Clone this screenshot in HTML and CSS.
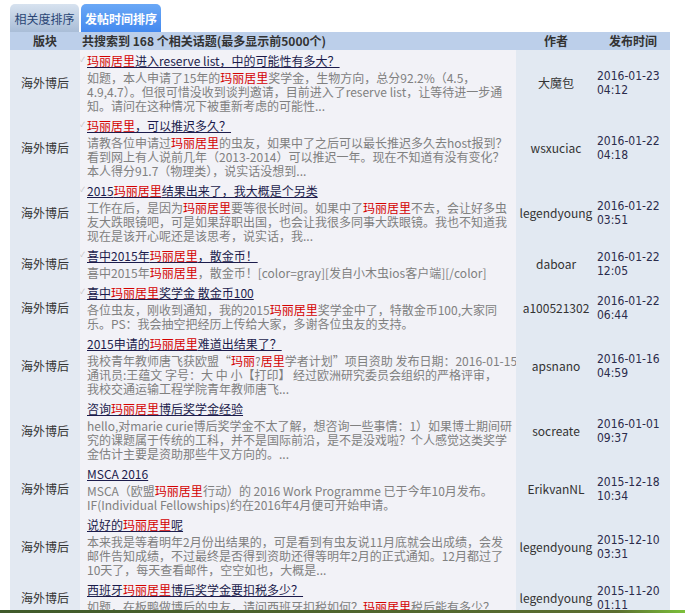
FILE: index.html
```html
<!DOCTYPE html>
<html lang="zh-CN">
<head>
<meta charset="utf-8">
<title>搜索结果</title>
<link rel="stylesheet" href="styles.css">
</head>
<body>
<div class="wrap">
  <div class="tabs">
    <a class="tab">相关度排序</a>
    <a class="tab active">发帖时间排序</a>
  </div>
  <table class="list">
    <colgroup><col class="c-forum"><col class="c-topic"><col class="c-author"><col class="c-time"></colgroup>
    <thead>
      <tr><th class="forum">版块</th><th class="topic">共搜索到 168 个相关话题(最多显示前5000个)</th><th class="author">作者</th><th class="time">发布时间</th></tr>
    </thead>
    <tbody>
      <tr>
        <td class="forum">海外博后</td>
        <td class="topic"><div class="title"><span class="chk">✓</span><a><em>玛丽居里</em>进入reserve list，中的可能性有多大？</a></div>
          <div class="desc">如题，本人申请了15年的<em>玛丽居里</em>奖学金，生物方向，总分92.2%（4.5，<br>4.9,4.7）。但很可惜没收到谈判邀请，目前进入了reserve list，让等待进一步通<br>知。请问在这种情况下被重新考虑的可能性...</div></td>
        <td class="author">大魔包</td>
        <td class="time">2016-01-23<br>04:12</td>
      </tr>
      <tr>
        <td class="forum">海外博后</td>
        <td class="topic"><div class="title"><span class="chk">✓</span><a><em>玛丽居里</em>，可以推迟多久？</a></div>
          <div class="desc">请教各位申请过<em>玛丽居里</em>的虫友，如果中了之后可以最长推迟多久去host报到？<br>看到网上有人说前几年（2013-2014）可以推迟一年。现在不知道有没有变化？<br>本人得分91.7（物理类），说实话没想到...</div></td>
        <td class="author">wsxuciac</td>
        <td class="time">2016-01-22<br>04:18</td>
      </tr>
      <tr>
        <td class="forum">海外博后</td>
        <td class="topic"><div class="title"><span class="chk">✓</span><a>2015<em>玛丽居里</em>结果出来了，我大概是个另类</a></div>
          <div class="desc">工作在后，是因为<em>玛丽居里</em>要等很长时间。如果中了<em>玛丽居里</em>不去，会让好多虫<br>友大跌眼镜吧，可是如果辞职出国，也会让我很多同事大跌眼镜。我也不知道我<br>现在是该开心呢还是该思考，说实话，我...</div></td>
        <td class="author">legendyoung</td>
        <td class="time">2016-01-22<br>03:51</td>
      </tr>
      <tr>
        <td class="forum">海外博后</td>
        <td class="topic"><div class="title"><span class="chk">✓</span><a>喜中2015年<em>玛丽居里</em>，散金币！</a></div>
          <div class="desc">喜中2015年<em>玛丽居里</em>，散金币！[color=gray][发自小木虫ios客户端][/color]</div></td>
        <td class="author">daboar</td>
        <td class="time">2016-01-22<br>12:05</td>
      </tr>
      <tr>
        <td class="forum">海外博后</td>
        <td class="topic"><div class="title"><span class="chk">✓</span><a>喜中<em>玛丽居里</em>奖学金 散金币100</a></div>
          <div class="desc">各位虫友，刚收到通知，我的2015<em>玛丽居里</em>奖学金中了，特散金币100,大家同<br>乐。PS：我会抽空把经历上传给大家，多谢各位虫友的支持。</div></td>
        <td class="author">a100521302</td>
        <td class="time">2016-01-22<br>06:44</td>
      </tr>
      <tr>
        <td class="forum">海外博后</td>
        <td class="topic"><div class="title"><a>2015申请的<em>玛丽居里</em>难道出结果了？</a></div>
          <div class="desc">我校青年教师唐飞获欧盟“<em>玛丽</em>?<em>居里</em>学者计划”项目资助 发布日期：2016-01-15<br>通讯员:王蕴文 字号：大 中 小【打印】 经过欧洲研究委员会组织的严格评审，<br>我校交通运输工程学院青年教师唐飞...</div></td>
        <td class="author">apsnano</td>
        <td class="time">2016-01-16<br>04:59</td>
      </tr>
      <tr>
        <td class="forum">海外博后</td>
        <td class="topic"><div class="title"><a>咨询<em>玛丽居里</em>博后奖学金经验</a></div>
          <div class="desc">hello,对marie curie博后奖学金不太了解，想咨询一些事情：1）如果博士期间研<br>究的课题属于传统的工科，并不是国际前沿，是不是没戏啦？个人感觉这类奖学<br>金估计主要是资助那些牛叉方向的。...</div></td>
        <td class="author">socreate</td>
        <td class="time">2016-01-01<br>09:37</td>
      </tr>
      <tr>
        <td class="forum">海外博后</td>
        <td class="topic"><div class="title"><a>MSCA 2016</a></div>
          <div class="desc">MSCA（欧盟<em>玛丽居里</em>行动）的 2016 Work Programme 已于今年10月发布。<br>IF(Individual Fellowships)约在2016年4月便可开始申请。</div></td>
        <td class="author">ErikvanNL</td>
        <td class="time">2015-12-18<br>10:34</td>
      </tr>
      <tr>
        <td class="forum">海外博后</td>
        <td class="topic"><div class="title"><a>说好的<em>玛丽居里</em>呢</a></div>
          <div class="desc">本来我是等着明年2月份出结果的，可是看到有虫友说11月底就会出成绩，会发<br>邮件告知成绩，不过最终是否得到资助还得等明年2月的正式通知。12月都过了<br>10天了，每天查看邮件，空空如也，大概是...</div></td>
        <td class="author">legendyoung</td>
        <td class="time">2015-12-10<br>03:31</td>
      </tr>
      <tr>
        <td class="forum">海外博后</td>
        <td class="topic"><div class="title"><a>西班牙<em>玛丽居里</em>博后奖学金要扣税多少？</a></div>
          <div class="desc">如题，在板鸭做博后的虫友，请问西班牙扣税如何？<em>玛丽居里</em>税后能有多少？</div></td>
        <td class="author">legendyoung</td>
        <td class="time">2015-11-20<br>01:11</td>
      </tr>
    </tbody>
  </table>
</div>
<div class="taskbar"></div>
</body>
</html>
```

FILE: styles.css
```css
html, body {
  margin: 0;
  padding: 0;
  overflow: hidden;
  background: #ffffff;
}
body {
  font-family: "Noto Sans CJK SC", sans-serif;
  font-size: 12px;
  color: #333;
}
.wrap {
  padding: 4px 0 0 10px;
  width: 660px;
}
.tabs {
  display: flex;
  gap: 2px;
  height: 28px;
}
.tab {
  display: flex;
  align-items: center;
  justify-content: center;
  height: 28px;
  border-radius: 5px 5px 0 0;
  font-size: 12px;
  color: #2a4675;
  background: linear-gradient(#d7e2ef, #a9bdd7);
  width: 69px;
}
.tab.active {
  width: 80px;
  color: #fff;
  font-weight: bold;
  background: linear-gradient(#6aa8f6, #4389ef);
}
.list {
  border-collapse: collapse;
  table-layout: fixed;
  width: 660px;
}
.c-forum { width: 70px; }
.c-topic { width: 436px; }
.c-author { width: 80px; }
.c-time { width: 74px; }
.list th {
  background: #bccfea;
  height: 18px;
  padding: 0;
  font-weight: bold;
  color: #333;
  line-height: 18px;
}
.list th.topic { text-align: left; padding-left: 2px; }
.list td {
  padding: 0;
  vertical-align: middle;
}
td.forum {
  background: #e3e9f2;
  text-align: center;
  color: #333;
}
td.topic {
  background: #f2f2f7;
  padding: 2px 0 2px 7px;
  vertical-align: top;
  overflow: hidden;
  white-space: nowrap;
}
td.author {
  background: #e2e9f2;
  text-align: center;
  color: #333;
}
td.time {
  background: #e2e9f2;
  font-family: "DejaVu Sans Condensed", "DejaVu Sans", sans-serif;
  font-size: 12px;
  line-height: 14px;
  color: #2b2b4b;
  padding-left: 1px;
}
.title {
  position: relative;
  line-height: 17px;
  margin-bottom: 2px;
}
.title a {
  color: #1c1c4c;
  text-decoration: underline;
}
.chk {
  position: absolute;
  left: -7px;
  top: -1px;
  font-size: 7px;
  color: #c4c4c4;
}
em {
  font-style: normal;
  color: #d40000;
}
.desc {
  color: #808080;
  line-height: 14px;
}
.taskbar {
  position: fixed;
  left: 0;
  right: 0;
  bottom: 0;
  height: 3px;
  background: linear-gradient(90deg, #3f5a2a 0, #5b6e30 90%, #7cc03a 100%);
}
```
